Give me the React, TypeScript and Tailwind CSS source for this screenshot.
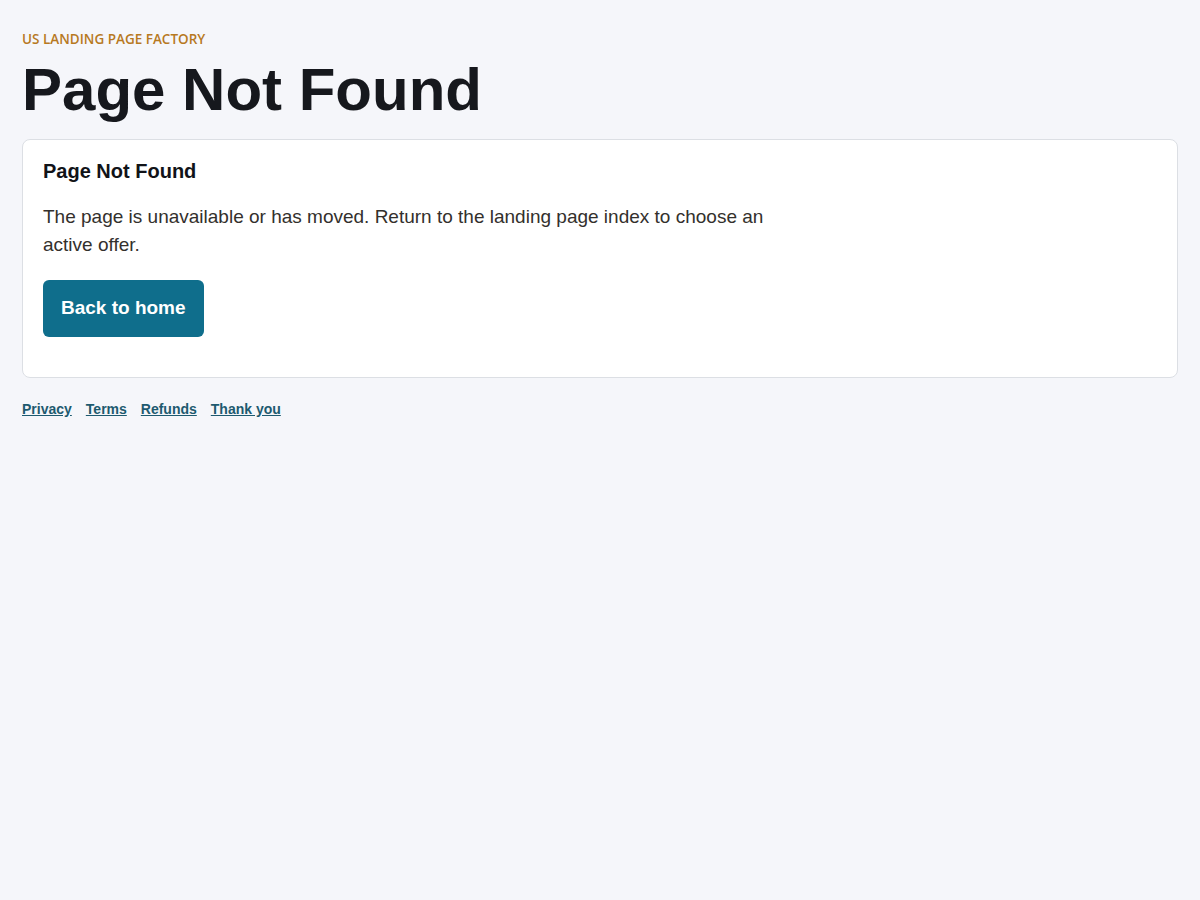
import React from 'react';

const App = () => {
  return <div className="min-h-[900px] w-full bg-[#f5f6fa] px-[22px] pt-[30px] font-['Liberation_Sans',Arial,sans-serif]">
      {/* Header */}
      <p className="text-[13.5px] leading-[18px] font-semibold uppercase text-[#b7791f] font-['Open_Sans','Liberation_Sans',sans-serif]">
        US Landing Page Factory
      </p>
      <h1 className="mt-[9px] text-[60px] leading-[66px] font-bold text-[#16181d]">
        Page Not Found
      </h1>
      {/* Card */}
      <section className="mt-[16px] bg-white border border-[#dcdfe4] rounded-lg px-[20px] pt-[20px] pb-[40px]">
        <h2 className="text-[20px] leading-[22px] font-bold text-[#111318]">Page Not Found</h2>
        <p className="mt-[21px] max-w-[750px] text-[19px] leading-[28px] text-[#33302c]">
          The page is unavailable or has moved. Return to the landing page index to choose an active offer.
        </p>
        <a href="#" className="mt-[21px] inline-flex items-center h-[57px] px-[18px] rounded-md bg-[#0f6e8c] text-white text-[19px] font-bold">
          Back to home
        </a>
      </section>
      {/* Footer */}
      <nav className="mt-[21px] flex gap-[14px] text-[14px] font-bold text-[#1d5a6f]">
        <a href="#" className="underline">Privacy</a>
        <a href="#" className="underline">Terms</a>
        <a href="#" className="underline">Refunds</a>
        <a href="#" className="underline">Thank you</a>
      </nav>
    </div>;
};
export default App;
